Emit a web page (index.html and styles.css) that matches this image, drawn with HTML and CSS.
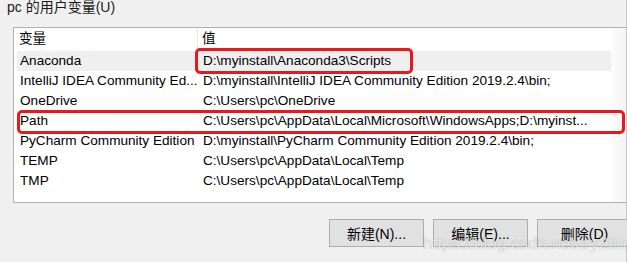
FILE: index.html
```html
<html>
<head>
    <meta name="viewport" content="width=device-width, initial-scale=1.0">
    <title>用户变量</title>
    <link rel="stylesheet" href="styles.css">
</head>
<body>
<div class="window">
    <div class="group-title">pc 的用户变量(U)</div>
    <div class="panel">
        <div class="list">
            <div class="row head">
                <div class="cell name">变量</div>
                <div class="cell value">值</div>
            </div>
            <div class="row selected">
                <div class="cell name">Anaconda</div>
                <div class="cell value">D:\myinstall\Anaconda3\Scripts<span class="mark mark-value"></span></div>
            </div>
            <div class="row">
                <div class="cell name">IntelliJ IDEA Community Ed...</div>
                <div class="cell value">D:\myinstall\IntelliJ IDEA Community Edition 2019.2.4\bin;</div>
            </div>
            <div class="row">
                <div class="cell name">OneDrive</div>
                <div class="cell value">C:\Users\pc\OneDrive</div>
            </div>
            <div class="row">
                <span class="mark mark-row"></span>
                <div class="cell name">Path</div>
                <div class="cell value">C:\Users\pc\AppData\Local\Microsoft\WindowsApps;D:\myinst...</div>
            </div>
            <div class="row">
                <div class="cell name">PyCharm Community Edition</div>
                <div class="cell value">D:\myinstall\PyCharm Community Edition 2019.2.4\bin;</div>
            </div>
            <div class="row">
                <div class="cell name">TEMP</div>
                <div class="cell value">C:\Users\pc\AppData\Local\Temp</div>
            </div>
            <div class="row">
                <div class="cell name">TMP</div>
                <div class="cell value">C:\Users\pc\AppData\Local\Temp</div>
            </div>
        </div>
        <div class="scroll"></div>
    </div>
    <div class="buttons">
        <button>新建(N)...</button>
        <button>编辑(E)...</button>
        <button>删除(D)</button>
    </div>
    <div class="watermark">https://blog.csdn.net/try2find</div>
</div>
</body>
</html>
```

FILE: styles.css
```css
/* Page */
body {
    margin: 0;
    background: #f0f0f0;
    font-family: 'Liberation Sans', 'Noto Sans CJK SC', sans-serif;
    font-size: 14px;
    color: #000;
    overflow: hidden;
}
/* Dialog area */
.window {
    position: relative;
    width: 626px;
    height: 262px;
    border-right: 1px solid #c8c8c8;
}
/* Group label */
.group-title {
    height: 27px;
    padding-left: 7px;
    line-height: 14px;
    box-sizing: border-box;
    color: #1a1a1a;
}
/* List box */
.panel {
    display: flex;
    margin-left: 13px;
    height: 176px;
    border: 1px solid #aeb1b6;
    border-right: none;
    background: #fff;
    box-sizing: border-box;
}
.list {
    flex: 1;
    padding-left: 3px;
    font-size: 13.6px;
}
.scroll {
    width: 15px;
    background: linear-gradient(to right, #fcfcfc, #f4f4f4);
}
/* Rows */
.row {
    position: relative;
    display: flex;
    height: 20px;
    line-height: 20px;
    white-space: nowrap;
}
.row.head {
    height: 23px;
    line-height: 22px;
}
.row.selected {
    background: #efefef;
}
.cell {
    position: relative;
}
.cell.name {
    width: 181px;
    padding-left: 3px;
    box-sizing: border-box;
    overflow: hidden;
}
.cell.value {
    padding-left: 5px;
}
.head .cell.name {
    padding-left: 2px;
    border-right: 1px solid #e5e5e5;
}
.head .cell.value {
    padding-left: 4px;
}
/* Red highlight frames */
.mark {
    position: absolute;
    border: 3px solid #e8191c;
    border-radius: 5px;
    box-sizing: border-box;
}
.mark-value {
    left: -3px;
    top: -3px;
    width: 218px;
    height: 26px;
}
.mark-row {
    left: 0;
    top: -1px;
    width: 608px;
    height: 24px;
}
/* Buttons */
.buttons {
    display: flex;
    gap: 9px;
    padding-left: 329px;
    margin-top: 16px;
}
button {
    flex: none;
    width: 95px;
    height: 28px;
    background: #e1e1e1;
    border: 1px solid #adadad;
    font-family: 'Liberation Sans', 'Noto Sans CJK SC', sans-serif;
    font-size: 14px;
    color: #000;
    padding: 0;
}
/* Site watermark */
.watermark {
    position: absolute;
    left: 423px;
    top: 234px;
    font-family: 'Liberation Sans', sans-serif;
    font-size: 17px;
    color: rgba(255, 255, 255, 0.75);
    text-shadow: 0 0 1px rgba(0, 0, 0, 0.35);
}
```
